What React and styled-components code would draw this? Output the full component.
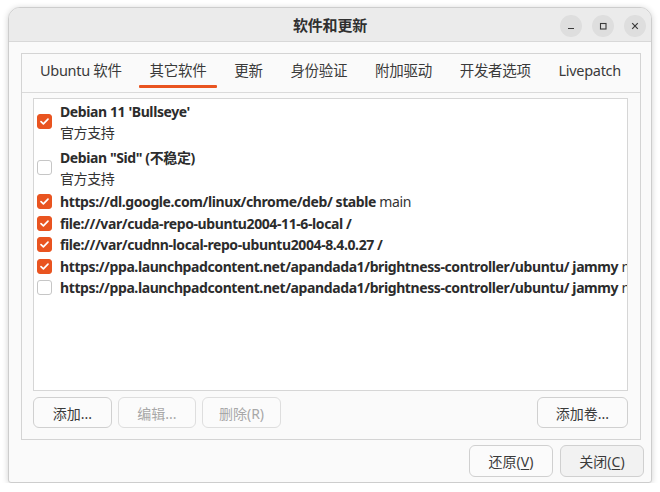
import React from "react";
import styled, { createGlobalStyle } from "styled-components";

const GlobalStyle = createGlobalStyle`
  html, body {
    margin: 0;
    padding: 0;
    background: #ffffff;
  }
  body {
    font-family: "Noto Sans", "Noto Sans CJK SC", sans-serif;
    color: #3d3d3d;
  }
`;

const tabs = ["Ubuntu 软件", "其它软件", "更新", "身份验证", "附加驱动", "开发者选项", "Livepatch"];

const sources = [
  { checked: true, title: "Debian 11 'Bullseye'", sub: "官方支持" },
  { checked: false, title: 'Debian "Sid" (不稳定)', sub: "官方支持" },
  { checked: true, bold: "https://dl.google.com/linux/chrome/deb/ stable", rest: " main" },
  { checked: true, bold: "file:///var/cuda-repo-ubuntu2004-11-6-local /" },
  { checked: true, bold: "file:///var/cudnn-local-repo-ubuntu2004-8.4.0.27 /" },
  {
    checked: true,
    bold: "https://ppa.launchpadcontent.net/apandada1/brightness-controller/ubuntu/ jammy",
    rest: " main",
  },
  {
    checked: false,
    bold: "https://ppa.launchpadcontent.net/apandada1/brightness-controller/ubuntu/ jammy",
    rest: " main",
  },
];

const App = () => {
  return (
    <>
      <GlobalStyle />
      <Window>
        <HeaderBar>
          <Title>软件和更新</Title>
          <Controls>
            <CtrlButton aria-label="minimize">
              <svg width="10" height="10" viewBox="0 0 10 10">
                <path d="M2 7.5h6" stroke="#3a3a3a" strokeWidth="1.2" />
              </svg>
            </CtrlButton>
            <CtrlButton aria-label="maximize">
              <svg width="10" height="10" viewBox="0 0 10 10">
                <rect x="2.5" y="2.5" width="5.5" height="5.5" fill="none" stroke="#3a3a3a" strokeWidth="1.1" />
              </svg>
            </CtrlButton>
            <CtrlButton aria-label="close">
              <svg width="10" height="10" viewBox="0 0 10 10">
                <path d="M2.2 2.2l5.6 5.6M7.8 2.2l-5.6 5.6" stroke="#3a3a3a" strokeWidth="1.2" />
              </svg>
            </CtrlButton>
          </Controls>
        </HeaderBar>

        <Body>
          <Notebook>
            <TabStrip>
              {tabs.map((t) => (
                <Tab key={t} $active={t === "其它软件"}>
                  {t}
                </Tab>
              ))}
            </TabStrip>

            <Page>
              <SourceList>
                {sources.map((s, i) => (
                  <Row key={i} $double={!!s.sub}>
                    <Check $checked={s.checked}>
                      {s.checked && (
                        <svg width="11" height="11" viewBox="0 0 11 11">
                          <path
                            d="M2 5.6l2.4 2.3L9 3.2"
                            fill="none"
                            stroke="#fff"
                            strokeWidth="1.7"
                            strokeLinecap="round"
                            strokeLinejoin="round"
                          />
                        </svg>
                      )}
                    </Check>
                    <RowText>
                      {s.title ? (
                        <>
                          <Line>
                            <b>{s.title}</b>
                          </Line>
                          <Line>{s.sub}</Line>
                        </>
                      ) : (
                        <Line>
                          <b>{s.bold}</b>
                          {s.rest}
                        </Line>
                      )}
                    </RowText>
                  </Row>
                ))}
              </SourceList>

              <ButtonRow>
                <Button $w={79}>添加...</Button>
                <Button $w={78} disabled>
                  编辑...
                </Button>
                <Button $w={79} disabled>
                  删除(R)
                </Button>
                <Button $w={91} $push>
                  添加卷...
                </Button>
              </ButtonRow>
            </Page>
          </Notebook>

          <ActionRow>
            <Button $w={84} $h={32}>
              还原(<u>V</u>)
            </Button>
            <Button $w={84} $h={32} $shade>
              关闭(<u>C</u>)
            </Button>
          </ActionRow>
        </Body>
      </Window>
    </>
  );
};

export default App;

const Window = styled.div`
  width: 642px;
  height: 474px;
  margin: 7px 0 0 8px;
  border: 1px solid #cdcdcd;
  border-radius: 12px 12px 3px 3px;
  background: #fafafa;
  box-shadow: 0 1px 6px rgba(0, 0, 0, 0.18);
  overflow: hidden;
  display: flex;
  flex-direction: column;
`;

const HeaderBar = styled.header`
  position: relative;
  height: 33px;
  flex: none;
  background: #ebebeb;
  border-bottom: 1px solid #d8d8d8;
  display: flex;
  align-items: center;
  justify-content: center;
`;

const Title = styled.div`
  font-size: 15px;
  font-weight: 700;
  color: #303030;
  letter-spacing: -0.2px;
`;

const Controls = styled.div`
  position: absolute;
  right: 5px;
  top: 7px;
  display: flex;
  gap: 10px;
`;

const CtrlButton = styled.span`
  width: 22px;
  height: 22px;
  border-radius: 50%;
  background: #dedede;
  display: flex;
  align-items: center;
  justify-content: center;
`;

const Body = styled.div`
  flex: 1;
  display: flex;
  flex-direction: column;
  gap: 5px;
  padding: 11px 10px 5px 12px;
`;

const Notebook = styled.section`
  height: 385px;
  border: 1px solid #d4d4d4;
  display: flex;
  flex-direction: column;
`;

const TabStrip = styled.nav`
  height: 38px;
  flex: none;
  border-bottom: 1px solid #dadada;
  display: flex;
  justify-content: space-between;
  padding: 0 8px 0 7px;
`;

const Tab = styled.div`
  position: relative;
  padding: 0 11px 7px;
  display: flex;
  align-items: center;
  font-size: 14.5px;
  letter-spacing: -0.3px;
  color: #3a3a3a;
  white-space: nowrap;

  &::after {
    content: "";
    display: ${(p) => (p.$active ? "block" : "none")};
    position: absolute;
    left: 0;
    right: 0;
    bottom: 4px;
    height: 3px;
    border-radius: 1px;
    background: #e95420;
  }
`;

const Page = styled.div`
  flex: 1;
  display: flex;
  flex-direction: column;
  gap: 6px;
  padding: 5px 12px 11px 11px;
`;

const SourceList = styled.div`
  flex: 1;
  background: #ffffff;
  border: 1px solid #d6d6d6;
  padding: 0 0 0 3px;
  overflow: hidden;
`;

const Row = styled.div`
  display: flex;
  align-items: center;
  gap: 8px;
  padding: ${(p) => (p.$double ? "1.5px 0 2.5px" : "0.25px 0")};
  white-space: nowrap;
`;

const Check = styled.span`
  flex: none;
  width: 15px;
  height: 15px;
  box-sizing: border-box;
  border-radius: 3px;
  display: flex;
  align-items: center;
  justify-content: center;
  background: ${(p) => (p.$checked ? "#e95420" : "#ffffff")};
  border: 1px solid ${(p) => (p.$checked ? "#e95420" : "#c6c6c6")};
`;

const RowText = styled.div`
  min-width: 0;
  display: flex;
  flex-direction: column;
`;

const Line = styled.div`
  font-size: 14px;
  line-height: 21px;
  letter-spacing: -0.4px;
  color: #333333;

  b {
    font-weight: 700;
    color: #2c2c2c;
  }
`;

const ButtonRow = styled.div`
  display: flex;
  gap: 6px;
`;

const ActionRow = styled.div`
  display: flex;
  justify-content: flex-end;
  gap: 7px;
  margin-right: -3px;
`;

const Button = styled.button`
  width: ${(p) => p.$w}px;
  height: ${(p) => p.$h || 31}px;
  margin-left: ${(p) => (p.$push ? "auto" : "0")};
  padding: 0;
  border: 1px solid #d0d0d0;
  border-radius: 6px;
  background: ${(p) => (p.$shade ? "#f2f2f2" : "#fbfbfb")};
  font-family: "Noto Sans", "Noto Sans CJK SC", sans-serif;
  font-size: 14px;
  color: #3a3a3a;

  &:disabled {
    color: #a8a8a8;
    border-color: #dedede;
  }

  u {
    text-decoration-thickness: 1px;
    text-underline-offset: 2px;
  }
`;
